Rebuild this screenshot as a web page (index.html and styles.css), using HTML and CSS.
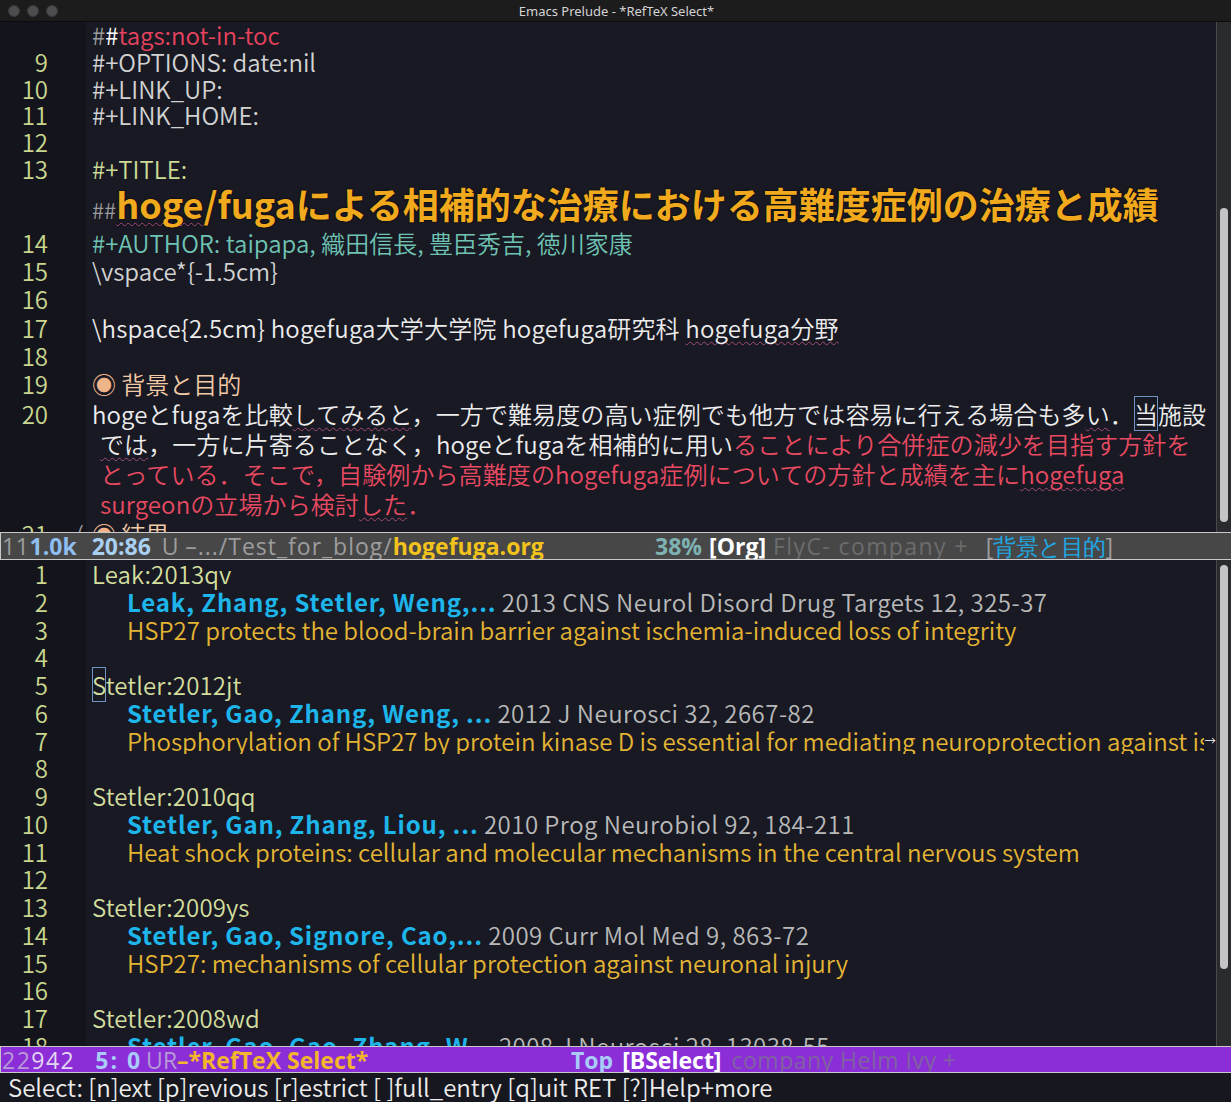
FILE: index.html
```html
<!DOCTYPE html>
<html lang="ja">
<head>
<meta charset="utf-8">
<title>Emacs Prelude - *RefTeX Select*</title>
<link rel="stylesheet" href="styles.css">
</head>
<body>
<div class="frame">
  <div class="titlebar">
    <div class="lights"><span class="light"></span><span class="light"></span><span class="light"></span></div>
    <div class="wtitle">Emacs Prelude - *RefTeX Select*</div>
  </div>

  <div class="win win-top">
    <div class="buf">
      <div class="row ra"><span class="ln"></span><span class="tx"><span class="c-dim">#</span><span class="c-white">#</span><span class="c-tag">tags:not-in-toc</span></span></div>
      <div class="row ra"><span class="ln">9</span><span class="tx c-opt">#+OPTIONS: date:nil</span></div>
      <div class="row ra"><span class="ln">10</span><span class="tx c-opt">#+LINK_UP:</span></div>
      <div class="row ra"><span class="ln">11</span><span class="tx c-opt">#+LINK_HOME:</span></div>
      <div class="row ra"><span class="ln">12</span><span class="tx"></span></div>
      <div class="row ra"><span class="ln">13</span><span class="tx c-kw">#+TITLE:</span></div>
      <div class="row rt"><span class="ln"></span><span class="tx"><span class="c-dim small">##</span><span class="c-title"><span class="sp">hoge</span>/fugaによる相補的な治療における高難度症例の治療と成績</span></span></div>
      <div class="row rb"><span class="ln">14</span><span class="tx c-author">#+AUTHOR: taipapa, 織田信長, 豊臣秀吉, 徳川家康</span></div>
      <div class="row rb"><span class="ln">15</span><span class="tx c-opt">\vspace*{-1.5cm}</span></div>
      <div class="row rb"><span class="ln">16</span><span class="tx"></span></div>
      <div class="row rb"><span class="ln">17</span><span class="tx c-white2 wide">\hspace{2.5cm} hogefuga大学大学院 hogefuga研究科 <span class="sp">hogefuga分野</span></span></div>
      <div class="row rb"><span class="ln">18</span><span class="tx"></span></div>
      <div class="row rb"><span class="ln">19</span><span class="tx c-head"><span class="bullet">◉</span> 背景と目的</span></div>
      <div class="row rp"><span class="ln">20</span><span class="tx para c-white2">hogeとfugaを比較<span class="sp">してみると</span>，一方で難易度の高い症例でも他方では容易に行える場合も多<span class="sp">い</span>．<span class="cur">当</span>施設</span></div>
      <div class="row rp"><span class="ln"></span><span class="tx para wrap"><span class="c-white2"><span class="sp">では</span>，一方に片寄ることなく，hogeとfugaを相補的に用い</span><span class="c-red">ることにより合併症の減少を目指す方針を</span></span></div>
      <div class="row rp"><span class="ln"></span><span class="tx para wrap c-red">とっている．そこで，自験例から高難度のhogefuga症例についての方針と成績を主に<span class="sp">hogefuga</span></span></div>
      <div class="row rp"><span class="ln"></span><span class="tx para wrap c-red">surgeonの立場から検討<span class="sp">した</span>．</span></div>
      <div class="row rp"><span class="ln">21<span class="fold">(</span></span><span class="tx c-head"><span class="bullet">◉</span> 結果</span></div>
    </div>
    <div class="sbar"><div class="thumb thumb-top"></div></div>
  </div>

  <div class="modeline ml-org">
    <div class="ml-left">
      <span class="m-dim">11</span><span class="m-size">1.0k</span>
      <span class="m-pos">20:86</span>
      <span class="m-dim">U</span><span class="m-dim m-path">–.../Test_for_blog/</span><span class="m-file">hogefuga.org</span>
    </div>
    <div class="ml-right">
      <span class="m-pct">38%</span>
      <span class="m-mode">[Org]</span>
      <span class="m-minor">FlyC- company +</span>
      <span class="m-which"><span class="m-dim">[</span><span class="m-cyan">背景と目的</span><span class="m-dim">]</span></span>
    </div>
  </div>

  <div class="win win-bot">
    <div class="buf">
      <div class="row rl"><span class="ln">1</span><span class="tx c-key">Leak:2013qv</span></div>
      <div class="row rl"><span class="ln">2</span><span class="tx ind"><span class="c-name">Leak, Zhang, Stetler, Weng,...</span> <span class="c-cite">2013 CNS Neurol Disord Drug Targets 12, 325-37</span></span></div>
      <div class="row rl"><span class="ln">3</span><span class="tx ind c-gold">HSP27 protects the blood-brain barrier against ischemia-induced loss of integrity</span></div>
      <div class="row rl"><span class="ln">4</span><span class="tx"></span></div>
      <div class="row rl"><span class="ln">5</span><span class="tx c-key"><span class="cur">S</span>tetler:2012jt</span></div>
      <div class="row rl"><span class="ln">6</span><span class="tx ind"><span class="c-name">Stetler, Gao, Zhang, Weng, ...</span> <span class="c-cite">2012 J Neurosci 32, 2667-82</span></span></div>
      <div class="row rl"><span class="ln">7</span><span class="tx ind c-gold clip">Phosphorylation of HSP27 by protein kinase D is essential for mediating neuroprotection against ischemic neuronal injury</span><span class="trunc">→</span></div>
      <div class="row rl"><span class="ln">8</span><span class="tx"></span></div>
      <div class="row rl"><span class="ln">9</span><span class="tx c-key">Stetler:2010qq</span></div>
      <div class="row rl"><span class="ln">10</span><span class="tx ind"><span class="c-name">Stetler, Gan, Zhang, Liou, ...</span> <span class="c-cite">2010 Prog Neurobiol 92, 184-211</span></span></div>
      <div class="row rl"><span class="ln">11</span><span class="tx ind c-gold">Heat shock proteins: cellular and molecular mechanisms in the central nervous system</span></div>
      <div class="row rl"><span class="ln">12</span><span class="tx"></span></div>
      <div class="row rl"><span class="ln">13</span><span class="tx c-key">Stetler:2009ys</span></div>
      <div class="row rl"><span class="ln">14</span><span class="tx ind"><span class="c-name">Stetler, Gao, Signore, Cao,...</span> <span class="c-cite">2009 Curr Mol Med 9, 863-72</span></span></div>
      <div class="row rl"><span class="ln">15</span><span class="tx ind c-gold">HSP27: mechanisms of cellular protection against neuronal injury</span></div>
      <div class="row rl"><span class="ln">16</span><span class="tx"></span></div>
      <div class="row rl"><span class="ln">17</span><span class="tx c-key">Stetler:2008wd</span></div>
      <div class="row rl"><span class="ln">18</span><span class="tx ind"><span class="c-name">Stetler, Gao, Gao, Zhang, W...</span> <span class="c-cite">2008 J Neurosci 28, 13038-55</span></span></div>
    </div>
    <div class="sbar"><div class="thumb thumb-bot"></div></div>
  </div>

  <div class="modeline ml-sel">
    <div class="ml-left">
      <span class="p-dim">22</span><span class="p-lite">942</span>
      <span class="p-pos p-pos1">5: 0</span>
      <span class="p-dim m-ur">UR</span><span class="p-buf">–*RefTeX Select*</span>
    </div>
    <div class="ml-right2">
      <span class="p-pos">Top</span>
      <span class="m-mode">[BSelect]</span>
      <span class="p-minor">company Helm Ivy +</span>
    </div>
  </div>

  <div class="echo">Select: [n]ext [p]revious [r]estrict [ ]full_entry [q]uit RET [?]Help+more</div>
</div>
</body>
</html>
```

FILE: styles.css
```css
* { box-sizing: border-box; }
html, body { margin: 0; padding: 0; }
body { width: 1231px; height: 1102px; overflow: hidden; background: #17181f; }

.frame { width: 1231px; height: 1102px; display: flex; flex-direction: column; background: #181923; }

.titlebar {
  height: 22px; flex: none; display: flex; align-items: center;
  background: #1c1c1d; border-bottom: 1px solid #0c0c0c;
  font-family: "Noto Sans", "Liberation Sans", sans-serif; font-size: 13px; color: #d4d4d4;
}
.lights { display: flex; gap: 7px; padding-left: 8px; width: 0; overflow: visible; }
.light { width: 12px; height: 12px; border-radius: 50%; background: #4d4d4f; border: 1px solid #3a3a3c; flex: none; }
.wtitle { flex: 1; text-align: center; padding-right: 6px; }

.win { display: flex; overflow: hidden; flex: none; }
.win-top { height: 510px; }
.win-bot { height: 486px; }

.buf {
  flex: 1; overflow: hidden;
  background: linear-gradient(to right, #14151c 0, #14151c 86px, #181923 86px);
  font-family: "Noto Sans CJK JP", "Noto Sans", sans-serif; font-size: 24px; font-weight: 350; color: #d6d6d6;
  letter-spacing: 0;
  white-space: nowrap;
}
.row { display: flex; align-items: center; }
.ra { height: 26.8px; line-height: 26.8px; }
.rt { height: 46px; line-height: 46px; }
.rb { height: 28.3px; line-height: 28.3px; }
.rp { height: 30px; line-height: 30px; }
.rl { height: 27.75px; line-height: 27.75px; }

.ln { flex: none; width: 86px; padding-right: 38px; text-align: right; color: #c9d78f; position: relative; letter-spacing: 0; }
.fold { position: absolute; left: 76px; color: #9a9a9a; }
.tx { padding-left: 6px; }
.tx.ind { padding-left: 41px; }
.tx.wrap { padding-left: 14px; }
.tx.para { letter-spacing: 0.1px; }
.tx.wide { letter-spacing: 0.19px; }
.clip { overflow: hidden; flex: 1; min-width: 0; }
.trunc { flex: none; width: 12px; font-size: 14px; color: #ffffff; font-family: "DejaVu Sans", sans-serif; }

.c-dim { color: #9c9c9c; }
.c-white { color: #ffffff; }
.c-white2 { color: #ececec; }
.c-tag { color: #e8435e; }
.c-opt { color: #d2d2d2; }
.c-kw { color: #cbdb95; }
.small { font-size: 22px; }
.c-title { color: #f1aa1d; font-weight: bold; font-size: 36px; letter-spacing: 0; text-shadow: 0 0 2px #000; }
.c-author { color: #6fc3b3; }
.c-head { color: #f3caa6; }
.bullet { color: #f0b48a; }
.c-red { color: #e84a62; }
.sp { text-decoration: underline wavy #a04c72; text-decoration-thickness: 1px; text-underline-offset: 3px; text-decoration-skip-ink: none; }
.cur { box-shadow: inset 0 0 0 1px #6f95c6; }

.c-key { color: #d3de9e; letter-spacing: 0.1px; }
.c-name { color: #1db5ea; font-weight: bold; letter-spacing: 0.85px; }
.c-cite { color: #b9b9b9; letter-spacing: 0.47px; }
.c-gold { color: #e4b433; }

.sbar { flex: none; width: 15px; background: #2a2b2e; border-left: 1px solid #4a4a4c; display: flex; flex-direction: column; }
.thumb { width: 8px; margin-left: 3px; border-radius: 4px; background: #c4c4c4; }
.thumb-top { margin-top: 186px; height: 314px; }
.thumb-bot { margin-top: 5px; height: 404px; }

.modeline {
  flex: none; display: flex; align-items: center; white-space: nowrap; overflow: hidden;
  font-family: "Open Sans", "Noto Sans", sans-serif; font-size: 23px; line-height: 24px;
  border-top: 1px solid #c8c8c8; border-bottom: 1px solid #c8c8c8; border-left: 1px solid #c8c8c8;
}
.ml-org { height: 28px; background: #474748; }
.ml-sel { height: 27px; background: #8b2ed8; }
.ml-left { width: 654px; flex: none; padding-left: 1px; display: flex; }
.ml-right { display: flex; gap: 7px; }
.ml-right2 { display: flex; gap: 3px; margin-left: -84px; }
.m-dim { color: #9d9d9d; letter-spacing: 0.6px; }
.m-size { color: #8fbef0; font-weight: bold; margin-right: 15px; }
.m-pos { color: #a9d0f2; font-weight: bold; margin-right: 11px; }
.m-path { margin-left: 6px; letter-spacing: 1px; }
.m-file { color: #f2c31a; font-weight: bold; letter-spacing: 0; }
.m-pct { color: #7fb3b3; font-weight: bold; }
.m-mode { color: #ffffff; font-weight: bold; }
.m-minor { color: #6c6c6c; letter-spacing: 1.4px; }
.m-which { margin-left: 10px; letter-spacing: -0.8px; }
.m-which .m-dim { letter-spacing: 0; }
.m-cyan { color: #1ea9e6; }

.p-dim { color: #b79ad6; letter-spacing: 1.5px; }
.p-lite { color: #e2d6f2; margin-right: 20px; letter-spacing: 1.5px; }
.p-pos { color: #a9cbf7; font-weight: bold; margin-right: 6px; }
.p-pos1 { letter-spacing: 2px; margin-right: 4px; }
.m-ur { margin-left: 0; letter-spacing: 0; }
.p-buf { color: #f2b52c; font-weight: bold; letter-spacing: 0; }
.p-minor { color: #8062a0; letter-spacing: 0.5px; margin-left: 7px; }

.echo {
  flex: 1; background: #17181f; color: #ececec;
  font-family: "Noto Sans CJK JP", "Noto Sans", sans-serif; font-size: 24px; font-weight: 350; line-height: 28px;
  letter-spacing: 0;
  padding-left: 8px; white-space: nowrap;
}
```
